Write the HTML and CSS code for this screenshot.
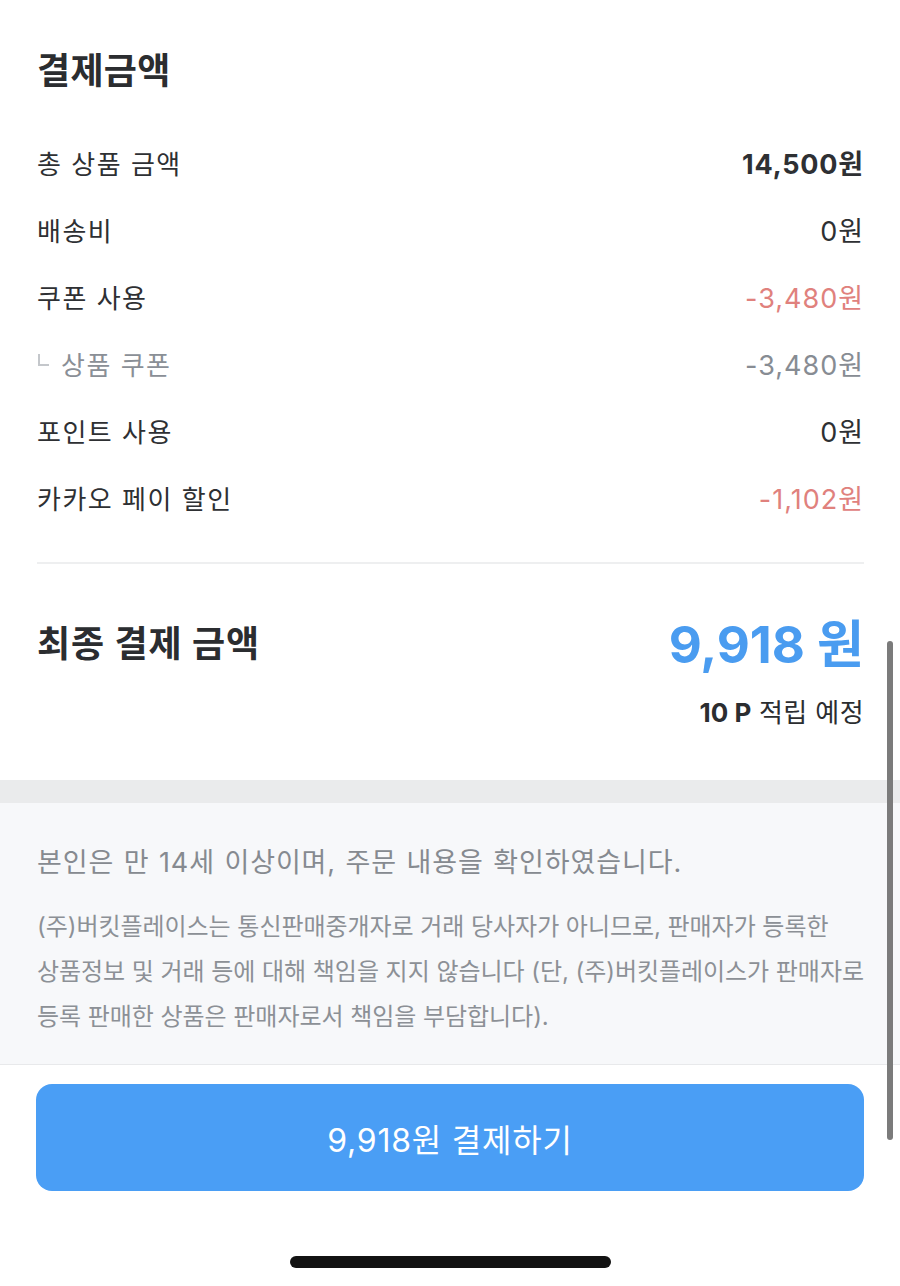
FILE: index.html
```html
<!DOCTYPE html>
<html lang="ko">
<head>
<meta charset="utf-8">
<link rel="stylesheet" href="styles.css">
</head>
<body>
<div class="page">
  <section class="summary">
    <h1 class="title">결제금액</h1>
    <div class="rows">
      <div class="row"><span class="label">총 상품 금액</span><span class="value strong">14,500원</span></div>
      <div class="row"><span class="label">배송비</span><span class="value">0원</span></div>
      <div class="row"><span class="label">쿠폰 사용</span><span class="value red">-3,480원</span></div>
      <div class="row sub"><span class="label"><span class="corner"></span>상품 쿠폰</span><span class="value grey">-3,480원</span></div>
      <div class="row"><span class="label">포인트 사용</span><span class="value">0원</span></div>
      <div class="row"><span class="label">카카오 페이 할인</span><span class="value red">-1,102원</span></div>
    </div>
    <div class="divider"></div>
    <div class="final">
      <span class="final-label">최종 결제 금액</span>
      <span class="final-value">9,918 원</span>
    </div>
    <div class="points"><b>10 P</b> 적립 예정</div>
  </section>
  <div class="band"></div>
  <section class="notice">
    <p class="agree">본인은 만 14세 이상이며, 주문 내용을 확인하였습니다.</p>
    <p class="legal">(주)버킷플레이스는 통신판매중개자로 거래 당사자가 아니므로, 판매자가 등록한<br>상품정보 및 거래 등에 대해 책임을 지지 않습니다 (단, (주)버킷플레이스가 판매자로<br>등록 판매한 상품은 판매자로서 책임을 부담합니다).</p>
  </section>
  <div class="actions">
    <button class="pay">9,918원 결제하기</button>
  </div>
  <div class="scrollbar"></div>
  <div class="home"></div>
</div>
</body>
</html>
```
FILE: styles.css
```css
* { box-sizing: border-box; }
html, body { margin: 0; padding: 0; background: #fff; }
body {
  font-family: "Inter", "Noto Sans CJK KR", sans-serif;
  color: #2b2d30;
}
.page {
  position: relative;
  width: 900px;
  height: 1286px;
  overflow: hidden;
  background: #fff;
}
.summary { padding: 46px 36px 0 37px; }
.title {
  margin: 0;
  font-size: 36px;
  line-height: 50px;
  font-weight: 700;
  letter-spacing: 0.3px;
  color: #2b2d30;
}
.rows { margin-top: 33px; }
.row {
  display: flex;
  justify-content: space-between;
  align-items: center;
  height: 67px;
  font-size: 26px;
}
.label { color: #2e3033; display: flex; align-items: center; letter-spacing: 1.5px; }
.value { color: #2e3033; font-size: 27px; letter-spacing: 1px; }
.value.strong { font-weight: 700; letter-spacing: 0.8px; }
.value.red { color: #e0817d; }
.value.grey { color: #878c93; }
.row.sub .label { color: #8a8f96; }
.corner {
  width: 11px;
  height: 12px;
  border-left: 2px solid #c4c7cb;
  border-bottom: 2px solid #c4c7cb;
  margin: 0 12px 8px 1px;
}
.divider {
  height: 2px;
  background: #eeeff0;
  margin-top: 31px;
}
.final {
  display: flex;
  justify-content: space-between;
  align-items: center;
  margin-top: 44px;
  height: 66px;
}
.final-label {
  font-size: 36px;
  font-weight: 700;
  letter-spacing: 0.9px;
  color: #2b2d30;
}
.final-value {
  font-size: 51px;
  font-weight: 700;
  color: #4a9cf0;
  letter-spacing: 0;
}
.points {
  text-align: right;
  font-size: 26px;
  margin-top: 21px;
  line-height: 36px;
  color: #2b2d30;
  letter-spacing: 0.4px;
}
.points b { font-weight: 700; letter-spacing: 0; }
.band {
  height: 23px;
  background: #eaebec;
  margin-top: 49px;
}
.notice {
  background: #f7f8fa;
  padding: 38px 10px 22px 37px;
  border-bottom: 1px solid #e8e9eb;
  height: 262px;
}
.agree {
  margin: 0;
  font-size: 27px;
  line-height: 44px;
  color: #868a90;
  letter-spacing: 0.9px;
  word-spacing: 1px;
  white-space: nowrap;
}
.legal {
  margin: 19px 0 0;
  font-size: 24px;
  line-height: 45px;
  color: #8c9096;
  letter-spacing: -0.05px;
  white-space: nowrap;
}
.actions { padding: 19px 36px 0 36px; }
.pay {
  display: block;
  width: 100%;
  height: 107px;
  border: 0;
  border-radius: 16px;
  background: #4a9ef5;
  color: #fff;
  font-family: "Inter", "Noto Sans CJK KR", sans-serif;
  font-size: 32px;
  letter-spacing: 0.8px;
  padding: 0;
}
.scrollbar {
  position: absolute;
  right: 7px;
  top: 641px;
  width: 6px;
  height: 499px;
  border-radius: 3px;
  background: #7b7b7b;
}
.home {
  position: absolute;
  left: 290px;
  top: 1256px;
  width: 321px;
  height: 12px;
  border-radius: 6px;
  background: #121212;
}
```
